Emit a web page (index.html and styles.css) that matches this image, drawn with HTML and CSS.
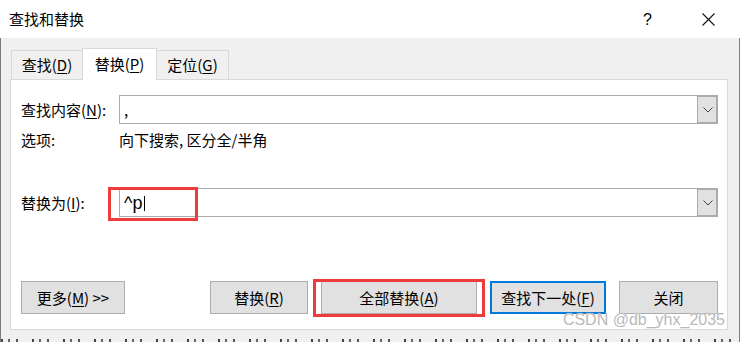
FILE: index.html
```html
<!DOCTYPE html>
<html lang="zh-CN">
<head>
    <meta charset="UTF-8">
    <meta name="viewport" content="width=device-width, initial-scale=1.0">
    <title>查找和替换</title>
    <link rel="stylesheet" href="styles.css">
</head>
<body>
    <div class="window">
        <div class="titlebar">
            <span class="title">查找和替换</span>
            <span class="help">?</span>
            <svg class="close-x" width="13" height="13" viewBox="0 0 13 13">
                <path d="M0.5 0.5 L12.5 12.5 M12.5 0.5 L0.5 12.5" stroke="#111" stroke-width="1.1" fill="none"/>
            </svg>
        </div>
        <div class="dialog">
            <div class="tabs">
                <div class="tab tab-find">查找(<u>D</u>)</div>
                <div class="tab tab-replace selected">替换(<u>P</u>)</div>
                <div class="tab tab-goto">定位(<u>G</u>)</div>
            </div>
            <div class="panel">
                <div class="form-row">
                    <label class="field-label">查找内容(<u>N</u>):</label>
                    <div class="combo">
                        <span class="combo-text">,</span>
                        <span class="combo-arrow">
                            <svg width="10" height="6" viewBox="0 0 10 6"><polyline points="0.5,0.5 5,5 9.5,0.5" stroke="#444" stroke-width="1" fill="none"/></svg>
                        </span>
                    </div>
                </div>
                <div class="options-row">
                    <span class="field-label">选项:</span>
                    <span>向下搜索, 区分全/半角</span>
                </div>
                <div class="form-row replace-row">
                    <label class="field-label">替换为(<u>I</u>):</label>
                    <div class="combo">
                        <span class="combo-text big">^p<span class="caret"></span></span>
                        <span class="combo-arrow">
                            <svg width="10" height="6" viewBox="0 0 10 6"><polyline points="0.5,0.5 5,5 9.5,0.5" stroke="#444" stroke-width="1" fill="none"/></svg>
                        </span>
                        <span class="mark mark-input"></span>
                    </div>
                </div>
                <div class="button-row">
                    <button class="btn btn-more">更多(<u>M</u>) &gt;&gt;</button>
                    <button class="btn btn-replace">替换(<u>R</u>)</button>
                    <button class="btn btn-all">全部替换(<u>A</u>)<span class="mark mark-btn"></span></button>
                    <button class="btn btn-next">查找下一处(<u>F</u>)</button>
                    <button class="btn btn-close">关闭</button>
                </div>
                <span class="watermark">CSDN @db_yhx_2035</span>
            </div>
            <div class="doc-edge"></div>
        </div>
    </div>
</body>
</html>
```

FILE: styles.css
```css
body {
    margin: 0;
    width: 740px;
    height: 342px;
    overflow: hidden;
    font-family: "Noto Sans CJK SC", "Noto Sans", sans-serif;
    font-size: 15px;
    color: #000;
}
u {
    text-decoration-thickness: 1px;
    text-underline-offset: 2px;
}
.window {
    display: flex;
    flex-direction: column;
    height: 342px;
}
.titlebar {
    height: 38px;
    flex-shrink: 0;
    background: #fff;
    display: flex;
    align-items: center;
    padding-left: 9px;
}
.title {
    flex: 1;
    line-height: 20px;
}
.help {
    font-family: "Liberation Sans", sans-serif;
    font-size: 16px;
    margin-right: 50px;
    margin-top: 2px;
}
.close-x {
    margin-right: 25px;
}
.dialog {
    flex: 1;
    background: #f0f0f0;
    border-left: 1px solid #7c7c7c;
    border-right: 1px solid #7c7c7c;
    padding: 10px 11px 0 9px;
    display: flex;
    flex-direction: column;
}
/* tabs */
.tabs {
    display: flex;
    align-items: flex-end;
    height: 32px;
    flex-shrink: 0;
    margin-bottom: -1px;
    padding-left: 1px;
}
.tab {
    height: 28px;
    margin-bottom: 1px;
    border: 1px solid #d9d9d9;
    border-bottom: none;
    background: #f0f0f0;
    display: flex;
    align-items: center;
    justify-content: center;
    line-height: 20px;
}
.tab-find { width: 70px; border-right: none; }
.tab-replace { width: 75px; }
.tab-goto { width: 71px; border-left: none; }
.tab.selected {
    height: 32px;
    margin-bottom: 0;
    background: #fff;
    position: relative;
    z-index: 1;
    padding-bottom: 2px;
    box-sizing: border-box;
}
/* panel */
.panel {
    position: relative;
    box-sizing: border-box;
    height: 251px;
    flex-shrink: 0;
    background: #fff;
    border: 1px solid #d9d9d9;
    padding: 15px 9px 0 10px;
}
.form-row {
    display: flex;
    align-items: center;
    height: 29px;
}
.field-label {
    width: 98px;
    flex-shrink: 0;
    line-height: 20px;
}
.combo {
    position: relative;
    flex: 1;
    height: 27px;
    border: 1px solid #ababab;
    display: flex;
    align-items: center;
}
.combo-text {
    flex: 1;
    padding-left: 4px;
    line-height: 20px;
}
.combo-text.big {
    font-family: "Liberation Sans", sans-serif;
    font-size: 18px;
    display: flex;
    align-items: center;
}
.caret {
    display: inline-block;
    width: 1px;
    height: 15px;
    background: #000;
    margin-left: 2px;
    margin-top: 2px;
}
.combo-arrow {
    width: 19px;
    height: 27px;
    background: #e1e1e1;
    border-left: 1px solid #ababab;
    box-shadow: inset -1px 0 0 #ababab, inset 0 -1px 0 #ababab, inset 0 1px 0 #ababab;
    display: flex;
    align-items: center;
    justify-content: center;
}
.options-row {
    display: flex;
    margin-top: 7px;
    height: 18px;
    align-items: center;
    line-height: 18px;
}
.replace-row {
    margin-top: 39px;
}
/* red highlight marks */
.mark {
    position: absolute;
    border: 3px solid #ef3b3b;
    pointer-events: none;
}
.mark-input {
    left: -12px;
    top: -2px;
    width: 84px;
    height: 28px;
}
.mark-btn {
    left: -9px;
    right: -9px;
    top: -3px;
    bottom: -4px;
}
/* buttons */
.button-row {
    display: flex;
    margin-top: 64px;
    gap: 13px;
}
.btn {
    height: 33px;
    background: #e1e1e1;
    border: 1px solid #adadad;
    font-family: inherit;
    font-size: 15px;
    color: #000;
    padding: 0;
    line-height: 20px;
}
.btn-more { width: 104px; }
.btn-replace { width: 98px; margin-left: auto; }
.btn-all { width: 156px; position: relative; }
.btn-next {
    width: 116px;
    border: 2px solid #0078d7;
}
.btn-close { width: 99px; }
.watermark {
    position: absolute;
    right: 2px;
    bottom: 0px;
    font-family: "Liberation Sans", sans-serif;
    font-size: 16px;
    color: #b9b9b9;
    text-shadow: 0 0 1px #fff;
}
.doc-edge {
    margin-top: 9px;
    height: 3px;
    flex-shrink: 0;
    margin-left: -9px;
    margin-right: -11px;
    background: repeating-linear-gradient(90deg, #444 0 2px, #f0f0f0 2px 7px, #666 7px 9px, #f0f0f0 9px 15px, #555 15px 17px, #f0f0f0 17px 31px);
}
```
